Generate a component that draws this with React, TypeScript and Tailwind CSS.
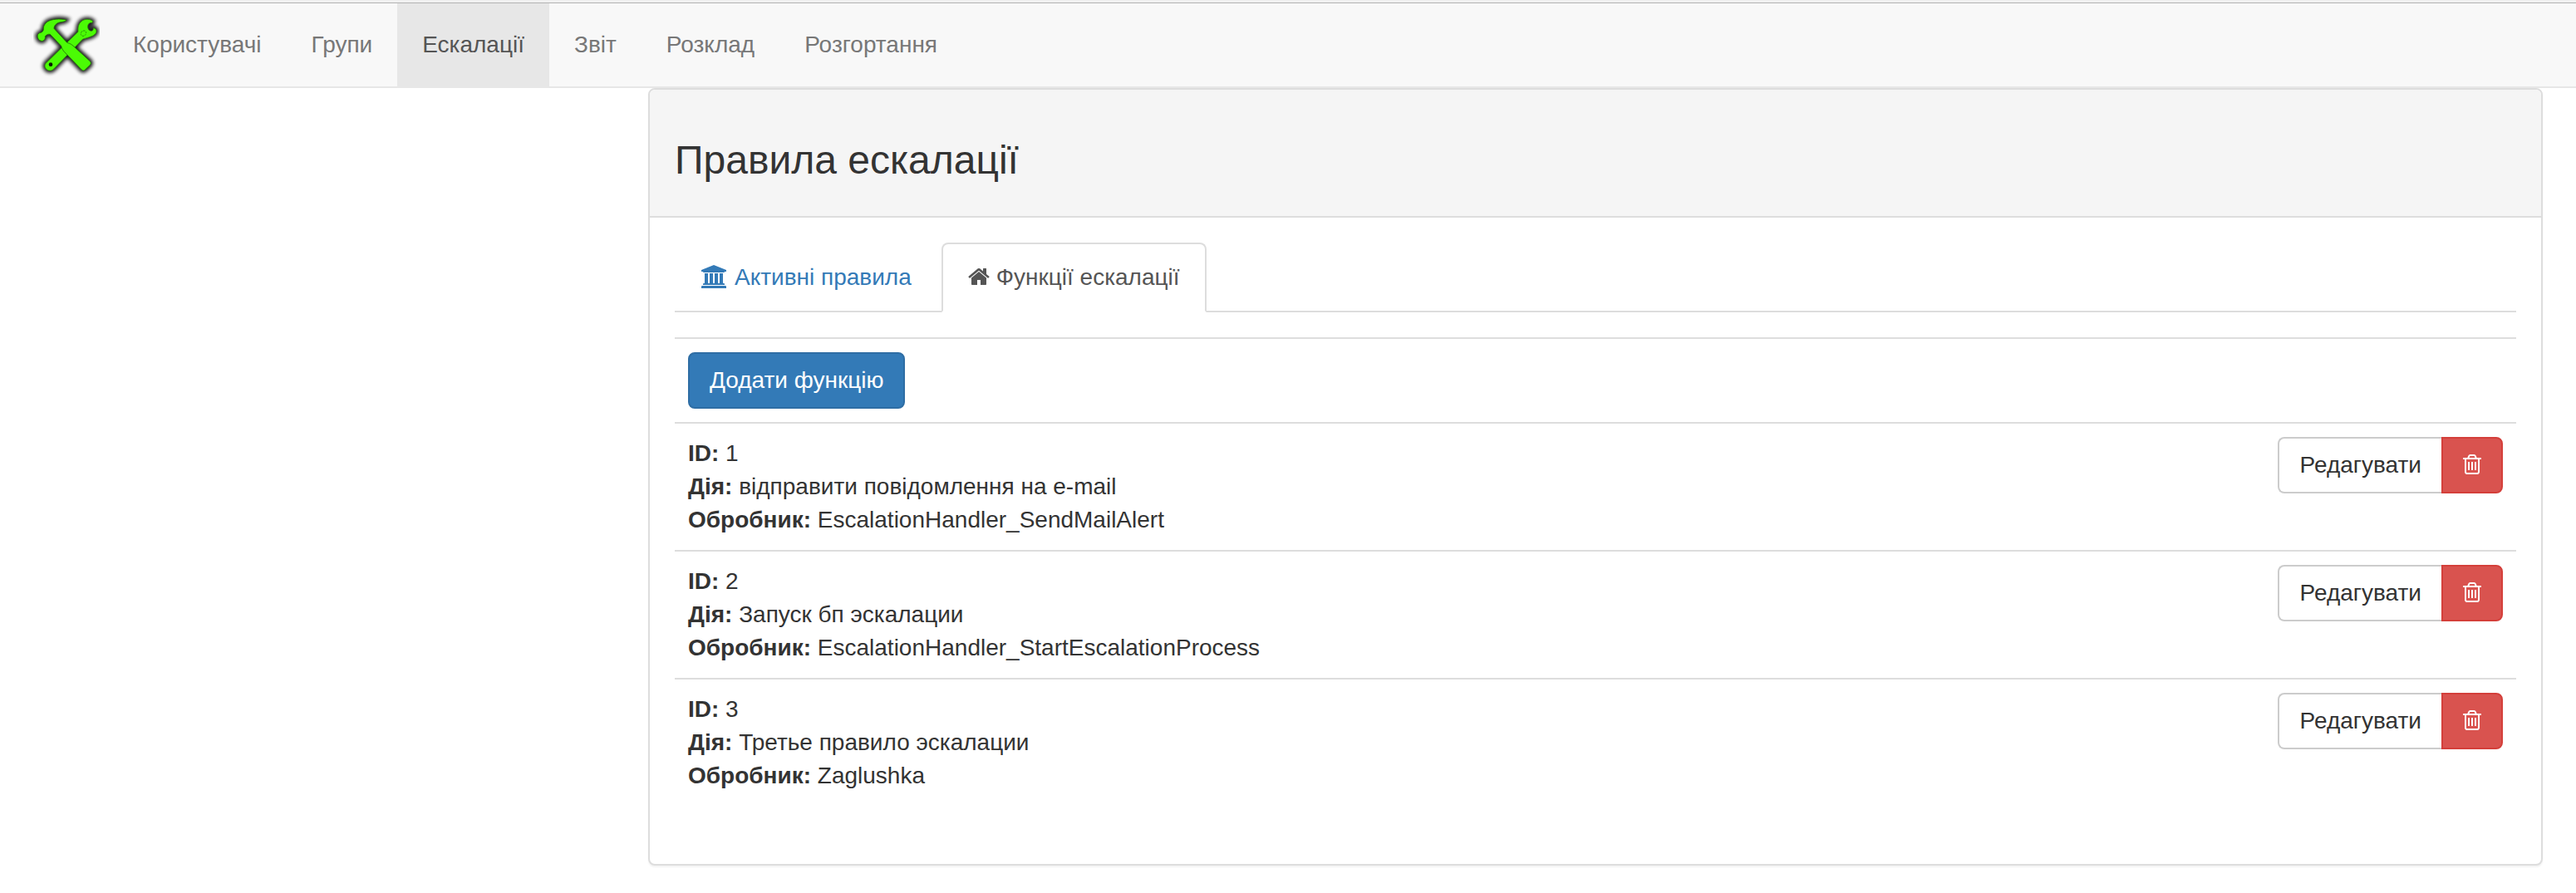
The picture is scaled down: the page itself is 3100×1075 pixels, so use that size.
const navItems = ['Користувачі', 'Групи', 'Ескалації', 'Звіт', 'Розклад', 'Розгортання'];

const rules = [
  { id: 1, action: 'відправити повідомлення на e-mail', handler: 'EscalationHandler_SendMailAlert' },
  { id: 2, action: 'Запуск бп эскалации', handler: 'EscalationHandler_StartEscalationProcess' },
  { id: 3, action: 'Третье правило эскалации', handler: 'Zaglushka' },
];

function ToolsLogo() {
  const wrench =
    'M105 229L188 148L222 115C221 97 223 84 238 74C250 68 266 68 275 77L272 82C262 81 256 88 257 99C258 107 263 112 270 112C275 111 277 107 277 101C284 102 289 107 288 114C286 126 272 131 262 134C252 138 244 139 238 142L135 248C128 256 117 257 109 251C101 245 100 236 105 229Z';
  const hammer =
    'M180 72C155 66 127 69 112 78C102 85 96 94 97 107C96 112 93 116 87 118C78 119 74 126 76 135C79 145 86 149 94 148C102 145 104 139 103 131C107 126 114 122 121 124L161 166C163 174 167 182 172 187L234 251C238 256 243 256 248 251L265 235C269 230 269 226 265 221L201 163C195 158 188 156 182 154L135 103C135 93 143 84 154 81C164 78 174 80 180 72Z';
  return (
    <svg className="size-20" viewBox="60 42 240 240" aria-label="logo">
      <defs>
        <filter id="shadow" x="-30%" y="-30%" width="160%" height="160%">
          <feGaussianBlur stdDeviation="7" />
        </filter>
      </defs>
      <g filter="url(#shadow)" fill="#000" stroke="#000" strokeWidth="17" opacity="0.9">
        <path d={wrench} />
        <path d={hammer} />
      </g>
      <path d={wrench} fill="#4bfb05" stroke="#2c8a0c" strokeWidth="2.5" />
      <circle cx="123" cy="233" r="7" fill="#0a1a05" />
      <path d="M233 117l5-6h9l4 5-2 9-5 5h-8l-4-5z" fill="none" stroke="#238708" strokeWidth="2.5" strokeDasharray="7 3" />
      <path d={hammer} fill="#4bfb05" stroke="#226e0a" strokeWidth="2.5" />
    </svg>
  );
}

function UniversityIcon() {
  return (
    <svg className="mb-0.5 h-7 w-[30px] shrink-0" viewBox="0 0 1920 1792" fill="currentColor">
      <path d="M960 0l960 384v128h-128q0 26-20.5 45t-48.5 19h-1526q-28 0-48.5-19t-20.5-45h-128v-128zm-704 640h256v768h128v-768h256v768h128v-768h256v768h128v-768h256v768h59q28 0 48.5 19t20.5 45v64h-1664v-64q0-26 20.5-45t48.5-19h59v-768zm1595 960q28 0 48.5 19t20.5 45v128h-1920v-128q0-26 20.5-45t48.5-19h1782z" />
    </svg>
  );
}

function HomeIcon() {
  return (
    <svg className="mb-0.5 h-7 w-[26px] shrink-0" viewBox="64 0 1664 1792" fill="currentColor">
      <path d="M1472 992v480q0 26-19 45t-45 19h-384v-384h-256v384h-384q-26 0-45-19t-19-45v-480q0-1 .5-3t.5-3l575-474 575 474q1 2 1 6zm223-69l-62 74q-8 9-21 11h-3q-13 0-21-7l-692-577-692 577q-12 8-24 7-13-2-21-11l-62-74q-8-10-7-23.5t11-21.5l719-599q32-26 76-26t76 26l244 204v-195q0-14 9-23t23-9h192q14 0 23 9t9 23v408l219 182q10 8 11 21.5t-7 23.5z" />
    </svg>
  );
}

function TrashIcon() {
  return (
    <svg className="mb-0.5 h-7 w-[22px]" viewBox="192 0 1408 1792" fill="currentColor">
      <path d="M704 736v576q0 14-9 23t-23 9h-64q-14 0-23-9t-9-23v-576q0-14 9-23t23-9h64q14 0 23 9t9 23zm256 0v576q0 14-9 23t-23 9h-64q-14 0-23-9t-9-23v-576q0-14 9-23t23-9h64q14 0 23 9t9 23zm256 0v576q0 14-9 23t-23 9h-64q-14 0-23-9t-9-23v-576q0-14 9-23t23-9h64q14 0 23 9t9 23zm128 724v-948h-896v948q0 22 7 40.5t14.5 27 10.5 8.5h832q3 0 10.5-8.5t14.5-27 7-40.5zm-672-1076h448l-48-117q-7-9-17-11h-317q-10 2-17 11zm928 32v64q0 14-9 23t-23 9h-96v948q0 83-47 143.5t-113 60.5h-832q-66 0-113-58.5t-47-141.5v-952h-96q-14 0-23-9t-9-23v-64q0-14 9-23t23-9h309l70-167q15-37 54-63t79-26h320q40 0 79 26t54 63l70 167h309q14 0 23 9t9 23z" />
    </svg>
  );
}

export default function App() {
  return (
    <div className="h-[1075px] w-[3100px] overflow-hidden bg-white font-['Liberation_Sans',Arial,sans-serif] text-[28px] leading-10 text-[#333]">
      <div className="h-1 border-b border-[#b2b2b2] bg-[#f1f1f1]" />
      <nav className="flex h-[102px] border-b-2 border-[#e7e7e7] bg-[#f8f8f8]">
        <a className="ml-10 mr-2.5 mt-2.5">
          <ToolsLogo />
        </a>
        {navItems.map((item) => (
          <a
            key={item}
            className={
              item === 'Ескалації'
                ? 'h-[100px] bg-[#e7e7e7] px-[30px] pt-[30px] text-[#555]'
                : 'h-[100px] px-[30px] pt-[30px] text-[#777]'
            }
          >
            {item}
          </a>
        ))}
      </nav>

      <main className="ml-[780px] h-[936px] w-[2280px] rounded-lg border-2 border-[#ddd] bg-white shadow-[0_2px_2px_rgba(0,0,0,0.05)]">
        <header className="h-[154px] rounded-t-md border-b-2 border-[#ddd] bg-[#f5f5f5] px-[30px] pt-[58px]">
          <h3 className="text-[48px] leading-[53px]">Правила ескалації</h3>
        </header>

        <div className="p-[30px]">
          <div className="flex h-[84px] border-b-2 border-[#ddd]">
            <a className="mr-1 flex h-[84px] items-center gap-2.5 rounded-t-lg border-2 border-transparent px-[30px] text-[#337ab7]">
              <UniversityIcon />
              Активні правила
            </a>
            <a className="flex h-[84px] items-center gap-2 rounded-t-lg border-2 border-[#ddd] border-b-white bg-white px-[30px] text-[#555]">
              <HomeIcon />
              Функції ескалації
            </a>
          </div>

          <div className="mt-[30px]">
            <div className="flex border-t-2 border-[#ddd] p-4">
              <button className="h-[68px] rounded-lg border-2 border-[#2e6da4] bg-[#337ab7] px-6 text-white">
                Додати функцію
              </button>
            </div>
            {rules.map((rule) => (
              <div key={rule.id} className="flex items-start justify-between border-t-2 border-[#ddd] p-4">
                <div>
                  <p><b>ID:</b> {rule.id}</p>
                  <p><b>Дія:</b> {rule.action}</p>
                  <p><b>Обробник:</b> {rule.handler}</p>
                </div>
                <div className="flex">
                  <button className="h-[68px] rounded-l-lg border-2 border-r-0 border-[#ccc] bg-white px-6">
                    Редагувати
                  </button>
                  <button className="h-[68px] rounded-r-lg border-2 border-[#d43f3a] bg-[#d9534f] px-6 text-white">
                    <TrashIcon />
                  </button>
                </div>
              </div>
            ))}
          </div>
        </div>
      </main>
    </div>
  );
}
